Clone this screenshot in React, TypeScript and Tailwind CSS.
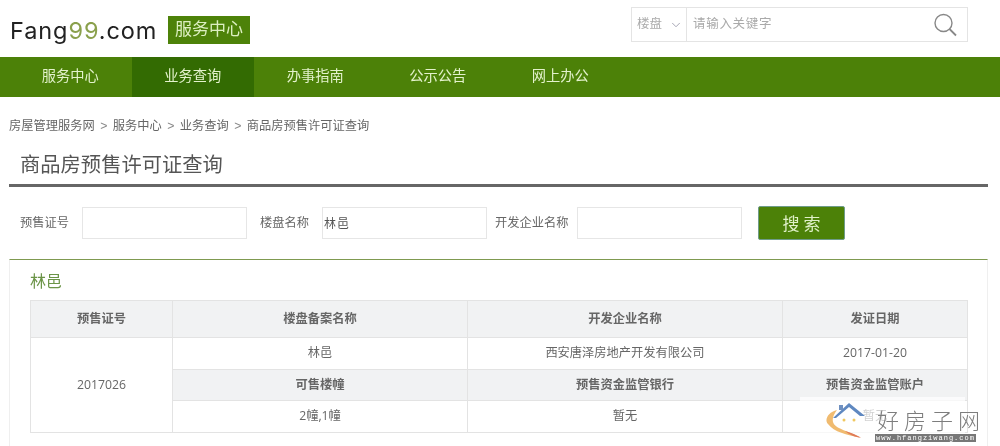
import { ChevronDown } from "lucide-react";

const cjk = "font-['Liberation_Sans','Noto_Sans_CJK_SC',sans-serif]";
const navItems = ["服务中心", "业务查询", "办事指南", "公示公告", "网上办公"];
const crumbs = ["房屋管理服务网", "服务中心", "业务查询", "商品房预售许可证查询"];

function Field({ label, value, labelW }: { label: string; value?: string; labelW: string }) {
  return (
    <div className="flex items-center">
      <span className={`${labelW} pt-[1px] text-[12.25px] text-[#666] leading-none`}>{label}</span>
      <div className="w-[165px] h-[32px] border border-[#e6e6e6] bg-white flex items-center pl-[1px] pt-[1px] text-[12px] text-[#555] tracking-[1px]">
        {value}
      </div>
    </div>
  );
}

function Th({ children }: { children: React.ReactNode }) {
  return (
    <td className="border border-[#e3e3e3] bg-[#f1f2f3] text-center text-[12.25px] font-bold text-[#666] p-0">{children}</td>
  );
}
function Td({ children, rowSpan }: { children: React.ReactNode; rowSpan?: number }) {
  return (
    <td rowSpan={rowSpan} className="border border-[#e3e3e3] bg-white text-center text-[12.25px] text-[#666] p-0 font-['Open_Sans','Noto_Sans_CJK_SC',sans-serif]">{children}</td>
  );
}

function Watermark() {
  return (
    <div className="absolute left-[800px] top-[397px] w-[180px] h-[49px] pointer-events-none">
      <div className="absolute left-0 top-0 w-[165px] h-[36px] bg-white/70" />
      <svg className="absolute left-[25px] top-[4px]" width="46" height="38" viewBox="0 0 46 36" fill="none">
        <path d="M12 8 C3 10 -1 18 3 22 C9 30 22 33 35 35.5 C24 29 10 27 8 20 C7 16 9 12 12 8Z" fill="#f0bb70" />
        <path d="M20 29 C27 31 31 33 36 35.5 C30 35.5 25 33 20 29Z" fill="#e07a58" />
        <path d="M8 16 L24 1 L40 14 L35 14 L24 5 L11 16Z" fill="#5f88c0" />
        <rect x="14" y="3" width="4" height="5" fill="#6f90c0" />
        <circle cx="19" cy="18" r="1.5" fill="#f0c860" />
        <circle cx="29" cy="18" r="1.5" fill="#f0c860" />
      </svg>
      <div className="absolute left-[77px] top-[8px] text-[22px] leading-[28px] tracking-[5px] text-[#7d7d7d] whitespace-nowrap font-['Noto_Sans_CJK_SC',serif] font-light">好房子网</div>
      <div className="absolute left-[75px] top-[37px] w-[101px] h-[8px] bg-[#777] text-white text-[7px] leading-[8px] tracking-[1px] text-center font-['Liberation_Mono',monospace] whitespace-nowrap overflow-hidden">www.hfangziwang.com</div>
    </div>
  );
}

export default function App() {
  return (
    <div className={`relative w-[1000px] h-[446px] overflow-hidden bg-white blur-[0.4px] ${cjk}`}>
      <header className="h-[57px] flex items-start pl-[10px] pr-[32px] justify-between">
        <div className="flex items-center mt-[16px] h-[28px]">
          <div className="w-[158px] pt-[2px] font-['Inter',sans-serif] text-[23.5px] leading-[28px] tracking-[0.9px] text-[#222] whitespace-nowrap">
            Fang<span className="text-[#8aa04c]">99</span>.com
          </div>
          <div className="w-[82px] h-[28px] bg-[#4d8209] text-[#dcefc0] text-[17px] flex items-center justify-center">服务中心</div>
        </div>
        <div className="mt-[7px] w-[337px] h-[35px] border border-[#e4e4e4] flex items-center text-[12.5px] text-[#aaa]">
          <div className="w-[55px] h-full border-r border-[#e4e4e4] flex items-center pl-[5px] gap-[7px] shrink-0">
            <span>楼盘</span>
            <ChevronDown size={14} strokeWidth={1.5} className="text-[#99a]" />
          </div>
          <div className="flex-1 pl-[6px] tracking-[0.7px]">请输入关键字</div>
          <svg className="mr-[9px]" width="25" height="24" viewBox="0 0 25 24" fill="none" stroke="#888" strokeWidth="1.4">
            <circle cx="10.5" cy="10" r="8.5" />
            <path d="M16.5 16 L23 22.5" strokeWidth="1.8" />
          </svg>
        </div>
      </header>

      <nav className="h-[40px] bg-[#4c8108] flex pl-[9px]">
        {navItems.map((n, i) => (
          <div key={n} className={`w-[122.5px] flex items-center justify-center text-[14.25px] text-[#e3f2cc] ${i === 1 ? "bg-[#336b02]" : ""}`}>
            {n}
          </div>
        ))}
      </nav>

      <div className="pl-[9px] mt-[21px] h-[16px] flex items-center text-[12.25px] text-[#666]">
        {crumbs.map((c, i) => (
          <span key={c} className="flex items-center">
            {i > 0 && <span className="w-[18px] text-center text-[#888]">&gt;</span>}
            {c}
          </span>
        ))}
      </div>

      <div className="ml-[9px] mt-[13px] h-[40px] border-b-[3px] border-[#666] w-[979px] pl-[11px] text-[20.3px] leading-[36px] text-[#555]">
        商品房预售许可证查询
      </div>

      <div className="flex items-center pl-[20px] mt-[19px] h-[34px]">
        <Field label="预售证号" labelW="w-[62px]" />
        <Field label="楼盘名称" value="林邑" labelW="w-[62px] ml-[13px]" />
        <Field label="开发企业名称" labelW="w-[82px] ml-[8px]" />
        <button className="ml-[16px] w-[87px] h-[34px] bg-[#4c8108] border border-[#6f9c8a] rounded-[2px] text-[#dff0c8] text-[17px] tracking-[4px] pl-[4px] pt-[3px]">搜索</button>
      </div>

      <section className="ml-[9px] mt-[19px] w-[979px] h-[188px] border-x border-x-[#efefef] border-t border-t-[#7f9a50] px-[20px]">
        <h2 className="text-[16px] leading-[24px] mt-[10px] text-[#6b9447]">林邑</h2>
        <table className="mt-[6px] w-[937px] table-fixed border-collapse">
          <colgroup>
            <col className="w-[142px]" />
            <col className="w-[295px]" />
            <col className="w-[315px]" />
            <col className="w-[185px]" />
          </colgroup>
          <tbody>
            <tr className="h-[37px]">
              <Th>预售证号</Th><Th>楼盘备案名称</Th><Th>开发企业名称</Th><Th>发证日期</Th>
            </tr>
            <tr className="h-[32px]">
              <Td rowSpan={3}>2017026</Td><Td>林邑</Td><Td>西安唐泽房地产开发有限公司</Td><Td>2017-01-20</Td>
            </tr>
            <tr className="h-[31px]">
              <Th>可售楼幢</Th><Th>预售资金监管银行</Th><Th>预售资金监管账户</Th>
            </tr>
            <tr className="h-[32px]">
              <Td>2幢,1幢</Td><Td>暂无</Td><Td>暂无</Td>
            </tr>
          </tbody>
        </table>
      </section>

      <Watermark />
    </div>
  );
}
